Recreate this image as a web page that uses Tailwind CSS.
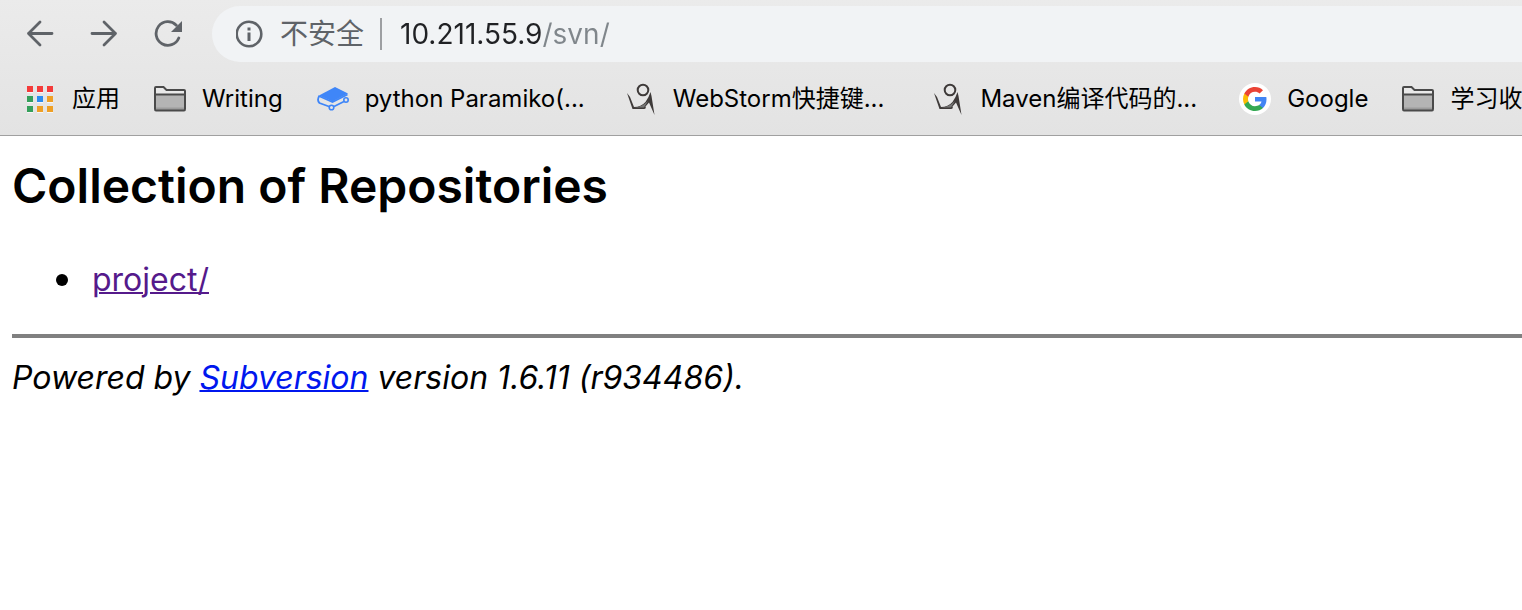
<!DOCTYPE html>
<html lang="zh-CN">
<head>
<meta charset="utf-8">
<meta name="viewport" content="width=device-width, initial-scale=1">
<title>Collection of Repositories</title>
<script src="https://cdn.jsdelivr.net/npm/@tailwindcss/browser@4"></script>
</head>
<body class="min-h-screen overflow-x-hidden bg-white text-black font-['Inter','Noto_Sans_CJK_SC',sans-serif]">
<svg class="hidden" aria-hidden="true">
  <symbol id="folder" viewBox="0 0 32 26">
    <path d="M1 24V3Q1 1 3 1H9.500Q10.500 1 11 2L12.500 4H30Q31 4 31 5V24Z" fill="#e9e9e9"/>
    <path d="M1 9H31V24H1Z" fill="#b4b4b4"/>
    <path d="M1 21.500H31V24H1Z" fill="#9c9c9c"/>
    <path d="M1 8.500H31M2 1H9.500L12.500 4H30Q31 4 31 5V23Q31 24.500 30 24.500H2Q1 24.500 1 23V2Q1 1 2 1Z" fill="none" stroke="#4a4a4a" stroke-width="2"/>
  </symbol>
  <symbol id="figure" viewBox="0 0 28 32">
    <circle cx="16" cy="7" r="5.300" fill="none" stroke="#3e3a39" stroke-width="2"/>
    <path d="M0 10L3 14L7 24Q14 24 18.500 19Q22 14 23.500 9L24.500 13L27.500 32L22 19.500L18.500 23.500Q19.500 25.500 17 26H5.500Z" fill="#3e3a39"/>
    <path d="M7 24.500H17L21 18Q15 24 7 24.500Z" fill="#777"/>
  </symbol>
</svg>

<header class="overflow-hidden border-b border-[#a0a0a0] bg-linear-to-b from-[#ebebeb] to-[#e3e3e3]">
  <div class="flex items-center pt-1.5 pl-2">
    <nav class="flex shrink-0" aria-label="导航">
      <button type="button" aria-label="返回" class="flex h-14 w-16 items-center justify-center">
        <svg class="size-7" viewBox="0 0 28 28" fill="none" stroke="#5f6368" stroke-width="2.800" stroke-linecap="round" stroke-linejoin="round"><path d="M26 13.500H2.500M14 2L2.500 13.500L14 25"/></svg>
      </button>
      <button type="button" aria-label="前进" class="flex h-14 w-16 items-center justify-center">
        <svg class="size-7" viewBox="0 0 28 28" fill="none" stroke="#5f6368" stroke-width="2.800" stroke-linecap="round" stroke-linejoin="round"><path d="M2 13.500H25.500M14 2L25.500 13.500L14 25"/></svg>
      </button>
      <button type="button" aria-label="重新加载" class="flex h-14 w-16 items-center justify-center">
        <svg class="size-7" viewBox="0 0 28 28"><path d="M22.300 5.200A11.800 11.800 0 1 0 24.800 18" fill="none" stroke="#5f6368" stroke-width="2.800" stroke-linecap="round"/><path d="M28 1V12H17Z" fill="#5f6368"/></svg>
      </button>
    </nav>
    <div class="ml-3 flex h-14 min-w-0 flex-1 items-center rounded-l-full bg-[#f1f3f5] pl-6">
      <button type="button" class="flex shrink-0 items-center gap-4 text-[28px] leading-10 text-[#5f6368]">
        <svg class="size-7" viewBox="0 0 28 28"><circle cx="13" cy="14" r="12.300" fill="none" stroke="#5f6368" stroke-width="2.600"/><path d="M11.500 7.500H14.500V10.500H11.500ZM11.500 12.500H14.500V21H11.500Z" fill="#5f6368"/></svg>
        <span>不安全</span>
      </button>
      <span class="ml-4 h-8 w-0.5 shrink-0 bg-[#9d9fa2]"></span>
      <input type="text" aria-label="地址" value="10.211.55.9/svn/" class="ml-4.5 h-10 min-w-0 flex-1 bg-[linear-gradient(to_right,#202124_143px,#80868b_143px)] bg-clip-text text-[28px] text-transparent outline-none">
    </div>
  </div>

  <nav aria-label="书签" class="flex h-18 items-center gap-x-8.5 pt-px pl-6.5 text-2xl leading-8 whitespace-nowrap box-content">
    <a href="#apps" class="flex shrink-0 items-center gap-4.5">
      <svg class="size-7" viewBox="0 0 28 28">
        <path d="M1 2H7V8H1ZM11 2H17V8H11ZM21 2H27V8H21ZM1 12H7V18H1ZM11 12H17V18H11ZM21 12H27V18H21ZM1 22H7V28H1ZM11 22H17V28H11ZM21 22H27V28H21Z" fill="#f7f7f7"/>
        <path d="M1 1H7V7H1ZM11 1H17V7H11ZM21 1H27V7H21Z" fill="#f43b3a"/>
        <path d="M1 11H7V17H1ZM1 21H7V27H1Z" fill="#35a05b"/>
        <path d="M11 11H17V17H11Z" fill="#2a8cf0"/>
        <path d="M21 11H27V17H21ZM11 21H17V27H11ZM21 21H27V27H21Z" fill="#efa026"/>
      </svg>
      <span>应用</span>
    </a>
    <a href="#writing" class="flex shrink-0 items-center gap-4">
      <svg class="h-6.5 w-8"><use href="#folder"/></svg>
      <span>Writing</span>
    </a>
    <a href="#paramiko" class="flex shrink-0 items-center gap-4">
      <svg class="size-8" viewBox="0 0 32 32">
        <path d="M2 12.500L18 4L31 10.500L15.500 18.500Z" fill="#3f86f8"/>
        <path d="M2.500 12.500Q-.5 17 2.500 20L12 23.500M3 13.500L15.500 19L30.500 11.500M17 23.500L27 18.500" fill="none" stroke="#3f86f8" stroke-width="1.800"/>
        <circle cx="14.500" cy="24.500" r="2.300" fill="#e6e6e6" stroke="#3f86f8" stroke-width="1.600"/>
        <circle cx="29" cy="17" r="2.200" fill="#e6e6e6" stroke="#3f86f8" stroke-width="1.600"/>
      </svg>
      <span>python Paramiko(...</span>
    </a>
    <a href="#webstorm" class="flex shrink-0 items-center gap-4.5 pl-2">
      <svg class="h-8 w-7"><use href="#figure"/></svg>
      <span>WebStorm快捷键...</span>
    </a>
    <a href="#maven" class="flex shrink-0 items-center gap-4.5 pl-4">
      <svg class="h-8 w-7"><use href="#figure"/></svg>
      <span>Maven编译代码的...</span>
    </a>
    <a href="#google" class="flex shrink-0 items-center gap-4 pl-2">
      <svg class="size-8" viewBox="0 0 32 32">
        <circle cx="16" cy="16" r="16" fill="#fff"/>
        <g transform="translate(4 4)">
          <path fill="#4285f4" d="M23.500 12.300c0-.8-.1-1.600-.2-2.300H12v4.500h6.500c-.3 1.500-1.100 2.700-2.400 3.600v3h3.900c2.200-2.100 3.500-5.100 3.500-8.800z"/>
          <path fill="#34a853" d="M12 24c3.200 0 6-1.100 8-2.900l-3.900-3c-1.100.7-2.500 1.200-4.100 1.200-3.100 0-5.800-2.100-6.700-5H1.300v3.100C3.300 21.300 7.300 24 12 24z"/>
          <path fill="#fbbc05" d="M5.300 14.300c-.5-1.500-.5-3.100 0-4.600V6.600h-4c-1.700 3.400-1.700 7.400 0 10.800z"/>
          <path fill="#ea4335" d="M12 4.800c1.800 0 3.300.6 4.600 1.800L20 3.200C17.900 1.200 15.200 0 12 0 7.300 0 3.300 2.700 1.300 6.600l4 3.100c.9-2.900 3.600-4.900 6.700-4.900z"/>
        </g>
      </svg>
      <span>Google</span>
    </a>
    <a href="#study" class="flex shrink-0 items-center gap-4">
      <svg class="h-6.5 w-8"><use href="#folder"/></svg>
      <span>学习收</span>
    </a>
  </nav>
</header>

<main class="pt-5 pl-3 text-[32px] leading-10">
  <h1 class="text-5xl leading-15 font-semibold">Collection of Repositories</h1>
  <ul class="mt-11 pl-11">
    <li class="flex items-center gap-6 before:size-3 before:rounded-full before:bg-black"><a href="#project" class="text-[#551a8b] underline decoration-2">project/</a></li>
  </ul>
  <hr class="mt-8.5 border-t-4 border-[#808080]">
  <p class="mt-5 italic">Powered by <a href="#subversion" class="text-[#0017ee] underline decoration-2">Subversion</a> version 1.6.11 (r934486).</p>
</main>
</body>
</html>
